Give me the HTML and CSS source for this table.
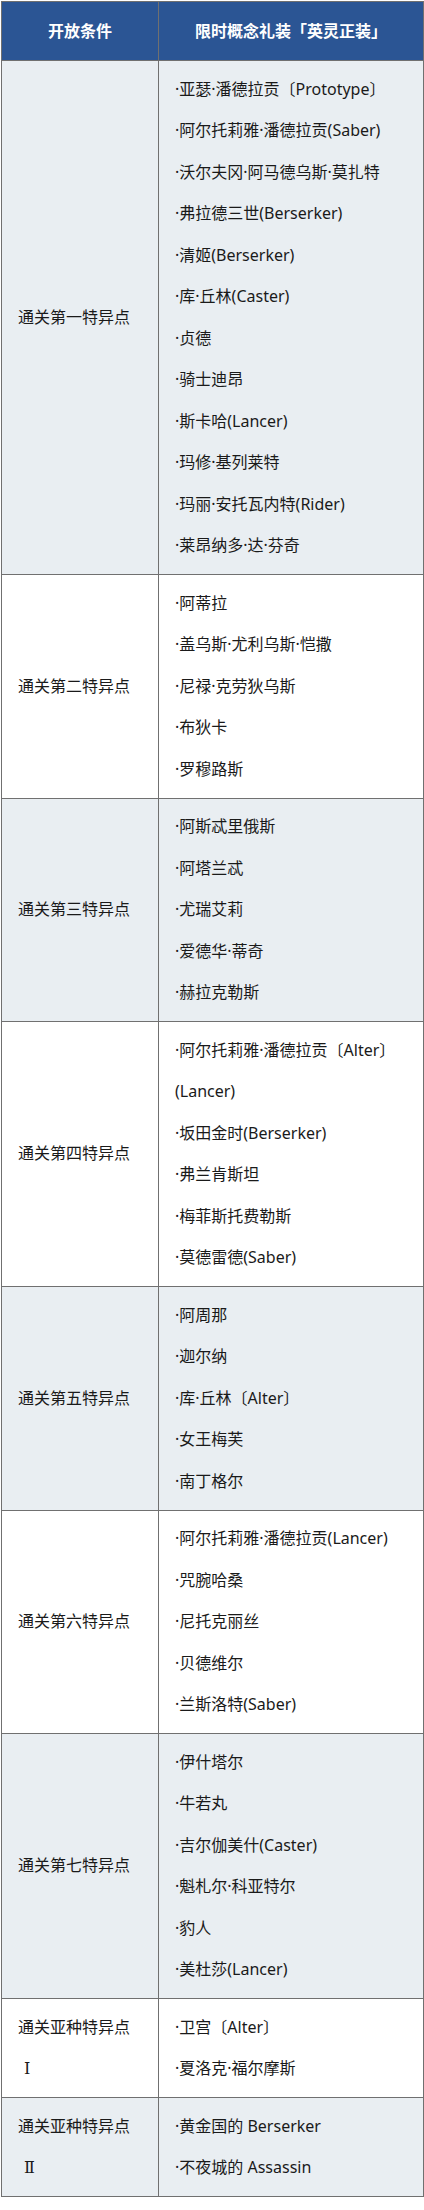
FILE: index.html
```html
<!DOCTYPE html>
<html lang="zh-CN">
<head>
<meta charset="utf-8">
<link rel="stylesheet" href="styles.css">
</head>
<body>
<div class="wrap">
<table class="tbl">
  <colgroup><col class="c1"><col class="c2"></colgroup>
  <thead>
    <tr><th>开放条件</th><th>限时概念礼装「英灵正装」</th></tr>
  </thead>
  <tbody>
    <tr class="odd">
      <td class="cond">通关第一特异点</td>
      <td class="list">
        <p>·亚瑟·潘德拉贡〔Prototype〕</p>
        <p>·阿尔托莉雅·潘德拉贡(Saber)</p>
        <p>·沃尔夫冈·阿马德乌斯·莫扎特</p>
        <p>·弗拉德三世(Berserker)</p>
        <p>·清姬(Berserker)</p>
        <p>·库·丘林(Caster)</p>
        <p>·贞德</p>
        <p>·骑士迪昂</p>
        <p>·斯卡哈(Lancer)</p>
        <p>·玛修·基列莱特</p>
        <p>·玛丽·安托瓦内特(Rider)</p>
        <p>·莱昂纳多·达·芬奇</p>
      </td>
    </tr>
    <tr>
      <td class="cond">通关第二特异点</td>
      <td class="list">
        <p>·阿蒂拉</p>
        <p>·盖乌斯·尤利乌斯·恺撒</p>
        <p>·尼禄·克劳狄乌斯</p>
        <p>·布狄卡</p>
        <p>·罗穆路斯</p>
      </td>
    </tr>
    <tr class="odd">
      <td class="cond">通关第三特异点</td>
      <td class="list">
        <p>·阿斯忒里俄斯</p>
        <p>·阿塔兰忒</p>
        <p>·尤瑞艾莉</p>
        <p>·爱德华·蒂奇</p>
        <p>·赫拉克勒斯</p>
      </td>
    </tr>
    <tr>
      <td class="cond">通关第四特异点</td>
      <td class="list">
        <p>·阿尔托莉雅·潘德拉贡〔Alter〕(Lancer)</p>
        <p>·坂田金时(Berserker)</p>
        <p>·弗兰肯斯坦</p>
        <p>·梅菲斯托费勒斯</p>
        <p>·莫德雷德(Saber)</p>
      </td>
    </tr>
    <tr class="odd">
      <td class="cond">通关第五特异点</td>
      <td class="list">
        <p>·阿周那</p>
        <p>·迦尔纳</p>
        <p>·库·丘林〔Alter〕</p>
        <p>·女王梅芙</p>
        <p>·南丁格尔</p>
      </td>
    </tr>
    <tr>
      <td class="cond">通关第六特异点</td>
      <td class="list">
        <p>·阿尔托莉雅·潘德拉贡(Lancer)</p>
        <p>·咒腕哈桑</p>
        <p>·尼托克丽丝</p>
        <p>·贝德维尔</p>
        <p>·兰斯洛特(Saber)</p>
      </td>
    </tr>
    <tr class="odd">
      <td class="cond">通关第七特异点</td>
      <td class="list">
        <p>·伊什塔尔</p>
        <p>·牛若丸</p>
        <p>·吉尔伽美什(Caster)</p>
        <p>·魁札尔·科亚特尔</p>
        <p>·豹人</p>
        <p>·美杜莎(Lancer)</p>
      </td>
    </tr>
    <tr>
      <td class="cond">通关亚种特异点<br><span class="num">Ⅰ</span></td>
      <td class="list">
        <p>·卫宫〔Alter〕</p>
        <p>·夏洛克·福尔摩斯</p>
      </td>
    </tr>
    <tr class="odd">
      <td class="cond">通关亚种特异点<br><span class="num">Ⅱ</span></td>
      <td class="list">
        <p>·黄金国的 Berserker</p>
        <p>·不夜城的 Assassin</p>
      </td>
    </tr>
  </tbody>
</table>
</div>
</body>
</html>
```

FILE: styles.css
```css
html, body {
  margin: 0;
  padding: 0;
  background: #ffffff;
}
.wrap {
  padding: 1px 1px 0 1px;
}
.tbl {
  width: 422px;
  border-collapse: collapse;
  table-layout: fixed;
  font-family: "Noto Sans", "Noto Sans CJK SC", sans-serif;
  font-size: 16px;
  color: #1a1a1a;
}
.c1 { width: 157px; }
.c2 { width: 265px; }
.tbl th, .tbl td {
  border: 1px solid #707070;
  vertical-align: middle;
  text-align: left;
}
.tbl th {
  background: #2b5594;
  color: #ffffff;
  font-weight: 700;
  text-align: center;
  height: 58px;
  padding: 0;
  font-size: 16px;
  line-height: 20px;
}
.tbl td {
  padding: 7.5px 6px 7.5px 16px;
  line-height: 41.5px;
}
.tbl tr.odd td {
  background: #e9eef2;
}
.list p {
  margin: 0;
}
.num {
  padding-left: 6px;
  font-family: "DejaVu Serif", "Noto Sans CJK SC", serif;
}
```
